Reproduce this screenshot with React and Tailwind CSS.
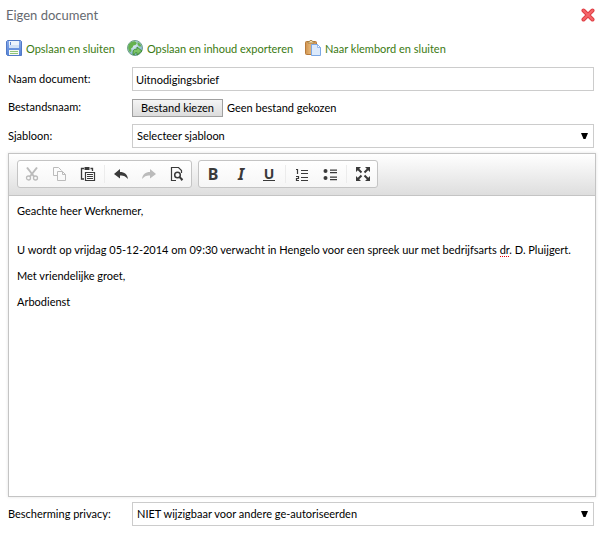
import { useRef, useState } from "react";

function SaveIcon() {
  return (
    <svg width="16" height="16" viewBox="0 0 16 16" aria-hidden="true">
      <defs>
        <linearGradient id="disk" x1="0" y1="0" x2="0" y2="1">
          <stop offset="0" stopColor="#86a9ea" />
          <stop offset="1" stopColor="#5583d6" />
        </linearGradient>
      </defs>
      <path d="M1.500.5h13l1 1v14h-14l-1-1v-13z" fill="url(#disk)" stroke="#5179c6" />
      <path d="M3 1h10v7H3z" fill="#eef4fc" />
      <path d="M3 5h10v3H3z" fill="#d3e2f6" />
      <path d="M4 2h1v3H4z" fill="#5b84d0" />
      <path d="M3 10h10v5H3z" fill="#f7faf3" />
      <path d="M4 11h8v1H4zM4 13h8v1H4z" fill="#8fc478" />
    </svg>
  );
}

function GlobeIcon() {
  return (
    <svg width="16" height="16" viewBox="0 0 16 16" aria-hidden="true">
      <defs>
        <radialGradient id="globe" cx=".4" cy=".3" r=".8">
          <stop offset="0" stopColor="#e2eff6" />
          <stop offset=".6" stopColor="#9cc6da" />
          <stop offset="1" stopColor="#6fa3b8" />
        </radialGradient>
      </defs>
      <circle cx="8" cy="8" r="7.500" fill="url(#globe)" stroke="#6fa08c" />
      <path d="M1.500 5c1-2.500 4-4 6.500-3.800L10 3 8.500 5 6.500 5.500 5.500 7.500 4 8.500 4.500 11 3 12.500C1 10 .8 7 1.500 5zM10.500 2c2 .5 3.500 2.500 4 4.500L12 6.500 10.500 4.500z" fill="#64b14f" />
      <path d="M6 14.500v-2.300c0-2 1-3 3-3h1V7l5 4-5 4v-2.300h-.5c-1.500 0-2 .8-2 1.800z" fill="#7cc466" stroke="#3c8a34" strokeWidth=".9" />
    </svg>
  );
}

function ClipboardIcon() {
  return (
    <svg width="16" height="16" viewBox="0 0 16 16" aria-hidden="true">
      <defs>
        <linearGradient id="board" x1="0" y1="0" x2="1" y2="0">
          <stop offset="0" stopColor="#cf9350" />
          <stop offset=".4" stopColor="#e4b272" />
          <stop offset="1" stopColor="#cf9350" />
        </linearGradient>
      </defs>
      <rect x=".5" y="1.500" width="11" height="13" rx="1" fill="url(#board)" stroke="#b87a3a" />
      <path d="M3 3V1.500h1.500L5 .5h2l.5 1H9V3z" fill="#f3dfb4" stroke="#a07a3c" strokeWidth=".8" />
      <path d="M6.500 4.500h6l3 3v8h-9z" fill="#dceafc" stroke="#7ba8e6" />
      <path d="M12.500 4.500v3h3z" fill="#fff" stroke="#7ba8e6" strokeWidth=".8" />
    </svg>
  );
}

function CloseIcon() {
  return (
    <svg width="14" height="14" viewBox="0 0 14 14" aria-hidden="true">
      <path d="M2.500 2.500l9 9M11.500 2.500l-9 9" stroke="#de3e44" strokeWidth="4" strokeLinecap="round" />
      <path d="M2.500 2.500l9 9M11.500 2.500l-9 9" stroke="#f5666a" strokeWidth="2" strokeLinecap="round" />
    </svg>
  );
}

const glyphs = {
  cut: (
    <g fill="none" stroke="currentColor">
      <path d="M3 1.500l7 9M13 1.500l-7 9" strokeWidth="2" />
      <circle cx="4.500" cy="12" r="2" strokeWidth="1.300" />
      <circle cx="11.500" cy="12" r="2" strokeWidth="1.300" />
    </g>
  ),
  copy: (
    <g fill="none" stroke="currentColor">
      <path d="M5.500 9.500h-4v-8h5l3 3" />
      <path d="M5.500 5.500h5l3 3v6h-8z" />
      <path d="M10.500 5.500v3h3" />
    </g>
  ),
  paste: (
    <g fill="none" stroke="currentColor">
      <path d="M4 2.500H1.500v10.500H4M10.500 2.500h2V5" strokeWidth="1.300" />
      <path d="M4.500 1h5v3h-5z" fill="currentColor" stroke="none" />
      <path d="M5.500 6.500h9v8h-9z" fill="#fff" strokeWidth="1.200" />
      <path d="M7 8.500h6M7 10.500h6M7 12.500h6" />
    </g>
  ),
  undo: <path d="M7 3L1 8l6 4.500V9.500c3-.3 5.500.5 8 3.500-.5-4.500-3.500-7-8-7z" fill="currentColor" />,
  redo: <path d="M9 3l6 5-6 4.500V9.500c-3-.3-5.500.5-8 3.500.5-4.500 3.500-7 8-7z" fill="currentColor" />,
  preview: (
    <g fill="none" stroke="currentColor">
      <path d="M7 14.500H2.500v-13h7l3 3V7M12.500 12v2.500" strokeWidth="1.200" />
      <circle cx="8.500" cy="9" r="2.800" strokeWidth="1.500" />
      <path d="M10.500 11l3 3" strokeWidth="2" />
    </g>
  ),
  numbered: (
    <g fill="none" stroke="currentColor">
      <path d="M2 3.500h1.500V8M2 10.500h2.500v2H2.500v2H5" strokeWidth="1.200" />
      <path d="M7 4.500h7M7 7.500h7M7 11.500h7M7 14.500h7" strokeWidth="1.200" />
    </g>
  ),
  bullets: (
    <g fill="currentColor">
      <circle cx="3.500" cy="5" r="2" />
      <circle cx="3.500" cy="12" r="2" />
      <path d="M8 3.500h7v1.200H8zM8 6h7v1.200H8zM8 10.500h7v1.200H8zM8 13h7v1.200H8z" />
    </g>
  ),
  maximize: (
    <g fill="currentColor" stroke="currentColor">
      <path d="M1 1h5L1 6zM15 1v5l-5-5zM1 15v-5l5 5zM15 15h-5l5-5z" stroke="none" />
      <path d="M2.500 2.500l4 4M13.500 2.500l-4 4M2.500 13.500l4-4M13.500 13.500l-4-4" strokeWidth="2" />
    </g>
  ),
};

function Tool({ label, icon, disabled, children }) {
  return (
    <button
      type="button"
      aria-label={label}
      title={label}
      disabled={disabled}
      className="flex h-[26px] w-7 items-center justify-center text-base leading-4 text-[#3a3a3a] disabled:text-[#bbb]"
    >
      {icon ? (
        <svg width="16" height="16" viewBox="0 0 16 16" aria-hidden="true">
          {glyphs[icon]}
        </svg>
      ) : (
        children
      )}
    </button>
  );
}

function Separator() {
  return <span className="mx-0.5 my-1 w-px bg-[#ececec]" />;
}

function ToolGroup({ children }) {
  return (
    <div className="flex rounded-[3px] border border-[#c4c4c4] bg-linear-to-b from-white to-[#f6f6f6]">
      {children}
    </div>
  );
}

function Label({ htmlFor, children }) {
  return (
    <label htmlFor={htmlFor} className="pb-0.5">
      {children}
    </label>
  );
}

function Select({ id, options }) {
  return (
    <div className="relative">
      <select id={id} className="block h-6 w-full appearance-none border border-[#ccc] bg-white pl-1 pr-6 leading-[22px]">
        {options.map((option) => (
          <option key={option}>{option}</option>
        ))}
      </select>
      <svg width="7" height="6" viewBox="0 0 7 6" aria-hidden="true" className="pointer-events-none absolute right-1.5 top-[9px]">
        <path d="M0 0h7L4.500 6h-2z" fill="#000" />
      </svg>
    </div>
  );
}

function Action({ icon, children }) {
  return (
    <a href="#" className="flex items-center gap-1 text-[#3b7a12]">
      {icon}
      <span>{children}</span>
    </a>
  );
}

export default function App() {
  const fileInput = useRef(null);
  const [fileName, setFileName] = useState("Geen bestand gekozen");

  return (
    <main className="bg-white pb-3.5 font-[Lato,sans-serif] text-[11px] leading-[13px] text-black">
      <header className="flex h-[30px] items-center justify-between pl-1.5 pr-[7px]">
        <h1 className="text-[13px] leading-5 text-[#666a70]">Eigen document</h1>
        <button type="button" aria-label="Sluiten">
          <CloseIcon />
        </button>
      </header>

      <nav className="mt-2.5 flex gap-3 px-1.5">
        <Action icon={<SaveIcon />}>Opslaan en sluiten</Action>
        <Action icon={<GlobeIcon />}>Opslaan en inhoud exporteren</Action>
        <Action icon={<ClipboardIcon />}>Naar klembord en sluiten</Action>
      </nav>

      <form onSubmit={(event) => event.preventDefault()}>
        <div className="mt-[11px] grid grid-cols-[124px_1fr] items-center px-2">
          <Label htmlFor="name">Naam document:</Label>
          <input id="name" type="text" defaultValue="Uitnodigingsbrief" className="h-6 w-full border border-[#ccc] px-[3px]" />

          <Label htmlFor="file">Bestandsnaam:</Label>
          <div className="flex h-[33px] items-center gap-1">
            <button
              type="button"
              onClick={() => fileInput.current.click()}
              className="h-[18px] border border-[#a0a0a0] bg-linear-to-b from-[#f4f4f4] to-[#dcdcdc] px-2 leading-4"
            >
              Bestand kiezen
            </button>
            <span>{fileName}</span>
            <input
              ref={fileInput}
              id="file"
              type="file"
              className="hidden"
              onChange={(event) => setFileName(event.target.files[0]?.name ?? "Geen bestand gekozen")}
            />
          </div>

          <Label htmlFor="template">Sjabloon:</Label>
          <Select id="template" options={["Selecteer sjabloon"]} />
        </div>

        <section className="ml-2 mr-1.5 mt-[5px] border border-[#c4c4c4] shadow-[0_0_3px_rgba(0,0,0,0.12)]">
          <div role="toolbar" aria-label="Opmaak" className="flex flex-wrap gap-1.5 border-b border-[#c4c4c4] bg-linear-to-b from-white to-[#dedede] px-2 pb-[7px] pt-1.5">
            <ToolGroup>
              <Tool label="Knippen" icon="cut" disabled />
              <Tool label="Kopiëren" icon="copy" disabled />
              <Tool label="Plakken" icon="paste" />
              <Separator />
              <Tool label="Ongedaan maken" icon="undo" />
              <Tool label="Opnieuw" icon="redo" disabled />
              <Tool label="Voorbeeld" icon="preview" />
            </ToolGroup>
            <ToolGroup>
              <Tool label="Vet"><b className="font-['Noto_Sans',sans-serif] font-bold">B</b></Tool>
              <Tool label="Cursief"><i className="font-['Noto_Sans',sans-serif] font-bold">I</i></Tool>
              <Tool label="Onderstreept">
                <span className="border-b border-current px-px font-['Noto_Sans',sans-serif] text-sm leading-3 font-bold">U</span>
              </Tool>
              <Separator />
              <Tool label="Genummerde lijst" icon="numbered" />
              <Tool label="Opsomming" icon="bullets" />
              <Separator />
              <Tool label="Maximaliseren" icon="maximize" />
            </ToolGroup>
          </div>
          <div
            role="textbox"
            aria-multiline="true"
            aria-label="Inhoud"
            contentEditable
            suppressContentEditableWarning
            spellCheck={false}
            className="min-h-[300px] p-2 outline-none"
          >
            <p className="mb-[26px]">Geachte heer Werknemer,</p>
            <p className="mb-[13px]">
              U wordt op vrijdag 05-12-2014 om 09:30 verwacht in Hengelo voor een spreek uur met bedrijfsarts{" "}
              <span className="border-b border-dotted border-red-600">dr</span>. D. Pluijgert.
            </p>
            <p className="mb-[13px]">Met vriendelijke groet,</p>
            <p>Arbodienst</p>
          </div>
        </section>

        <div className="mt-[5px] grid grid-cols-[124px_1fr] items-center px-2">
          <Label htmlFor="privacy">Bescherming privacy:</Label>
          <Select id="privacy" options={["NIET wijzigbaar voor andere ge-autoriseerden"]} />
        </div>
      </form>
    </main>
  );
}
